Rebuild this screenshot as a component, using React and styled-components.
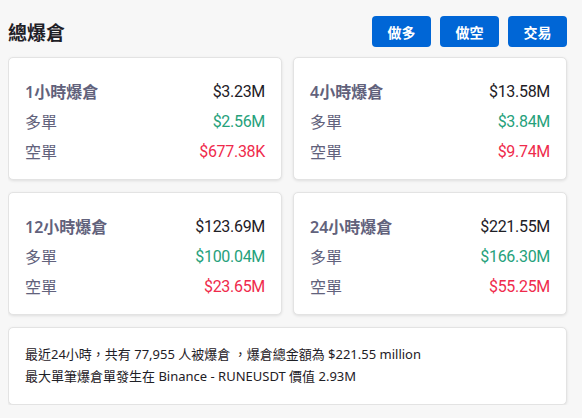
import React from 'react';
import styled, { createGlobalStyle } from 'styled-components';

const GlobalStyle = createGlobalStyle`
  body {
    margin: 8px;
    background: #f7f7f7;
    font-family: "Noto Sans", "Noto Sans CJK TC", sans-serif;
  }
`;

const Page = styled.div`
  width: 559px;
`;

const Header = styled.div`
  display: flex;
  align-items: center;
  justify-content: space-between;
  padding-top: 8px;
  margin-bottom: 10px;
`;

const Title = styled.h1`
  margin: 0;
  font-size: 19px;
  font-weight: 700;
  color: #1e2026;
  font-family: "Noto Sans CJK TC", sans-serif;
`;

const Buttons = styled.div`
  display: flex;
  gap: 9px;
`;

const Button = styled.button`
  width: 59px;
  height: 31px;
  border: none;
  border-radius: 4px;
  background: #0066d6;
  color: #fff;
  font-size: 14px;
  font-weight: 700;
  font-family: "Noto Sans CJK TC", sans-serif;
`;

const Grid = styled.div`
  display: grid;
  grid-template-columns: 1fr 1fr;
  gap: 12px 11px;
`;

const Card = styled.div`
  background: #fff;
  border: 1px solid #e3e3e3;
  border-radius: 5px;
  box-shadow: 0 1px 3px rgba(0, 0, 0, 0.1);
  padding: 18px 16px 13px;
  box-sizing: border-box;
`;

const Row = styled.div`
  display: flex;
  justify-content: space-between;
  align-items: center;
  height: 30px;
  font-size: 16px;
`;

const Label = styled.span`
  color: #62627c;
  font-weight: ${p => (p.$head ? 600 : 400)};
  font-family: "Noto Sans", "Noto Sans CJK TC", sans-serif;
`;

const colors = { total: '#1e2026', long: '#26a17b', short: '#ef2b4c' };

const Value = styled.span`
  color: ${p => colors[p.$kind]};
  font-family: "Roboto", sans-serif;
  letter-spacing: -0.3px;
`;

const Note = styled(Card)`
  margin-top: 12px;
  font-size: 13px;
  line-height: 22px;
  color: #1e2026;
  padding: 15px 16px 17px;
`;

const data = [
  ['1小時爆倉', '$3.23M', '$2.56M', '$677.38K'],
  ['4小時爆倉', '$13.58M', '$3.84M', '$9.74M'],
  ['12小時爆倉', '$123.69M', '$100.04M', '$23.65M'],
  ['24小時爆倉', '$221.55M', '$166.30M', '$55.25M'],
];

export default function App() {
  return (
    <Page>
      <GlobalStyle />
      <Header>
        <Title>總爆倉</Title>
        <Buttons>
          <Button>做多</Button>
          <Button>做空</Button>
          <Button>交易</Button>
        </Buttons>
      </Header>
      <Grid>
        {data.map(([t, total, long, short]) => (
          <Card key={t}>
            <Row>
              <Label $head>{t}</Label>
              <Value $kind="total">{total}</Value>
            </Row>
            <Row>
              <Label>多單</Label>
              <Value $kind="long">{long}</Value>
            </Row>
            <Row>
              <Label>空單</Label>
              <Value $kind="short">{short}</Value>
            </Row>
          </Card>
        ))}
      </Grid>
      <Note>
        <div>最近24小時，共有 77,955 人被爆倉 ，爆倉總金額為 $221.55 million</div>
        <div>最大單筆爆倉單發生在 Binance - RUNEUSDT 價值 2.93M</div>
      </Note>
    </Page>
  );
}
